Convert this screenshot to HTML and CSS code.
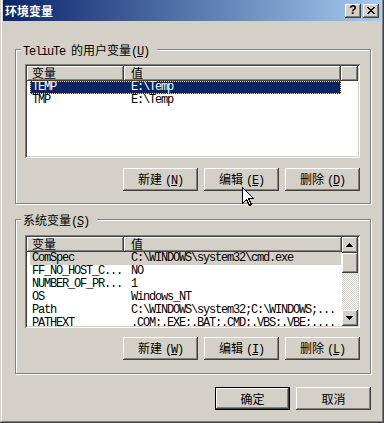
FILE: index.html
```html
<!DOCTYPE html>
<html lang="zh-CN">
<head>
    <meta charset="UTF-8"/>
    <title>环境变量</title>
    <link rel="stylesheet" href="styles.css">
</head>
<body>

<div class="window">
    <div class="titlebar">
        <span class="title">环境变量</span>
        <div class="caption-btns">
            <span class="cap-btn help">?</span>
            <span class="cap-btn">
                <svg width="8" height="7" viewBox="0 0 8 7" shape-rendering="crispEdges">
                    <path d="M0 0h2v1h1v1h2V1h1V0h2v1H7v1H6v1H5v1h1v1h1v1h1v1H6V6H5V5H3v1H2v1H0V6h1V5h1V4h1V3H2V2H1V1H0z" fill="#000"/>
                </svg>
            </span>
        </div>
    </div>

    <div class="content">
        <div class="group">
            <div class="legend"><span class="en">TeliuTe </span>的用户变量<span class="en">(<u>U</u>)</span></div>
            <div class="listview user-list">
                <div class="lv-header">
                    <div class="col col-name">变量</div>
                    <div class="col col-value">值</div>
                    <div class="col col-fill"></div>
                </div>
                <div class="row selected"><span class="cell cell-name en">TEMP</span><span class="cell en">E:\Temp</span></div>
                <div class="row"><span class="cell cell-name en">TMP</span><span class="cell en">E:\Temp</span></div>
            </div>
            <div class="btn-row">
                <button class="btn">新建<span class="en key">(<u>N</u>)</span></button>
                <button class="btn">编辑<span class="en key">(<u>E</u>)</span></button>
                <button class="btn">删除<span class="en key">(<u>D</u>)</span></button>
            </div>
        </div>

        <div class="group system">
            <div class="legend">系统变量<span class="en">(<u>S</u>)</span></div>
            <div class="listview sys-list">
                <div class="lv-main">
                    <div class="lv-header">
                        <div class="col col-name">变量</div>
                        <div class="col col-value">值</div>
                    </div>
                    <div class="lv-rows">
                        <div class="row inactive"><span class="cell cell-name en">ComSpec</span><span class="cell en">C:\WINDOWS\system32\cmd.exe</span></div>
                        <div class="row"><span class="cell cell-name en">FF_NO_HOST_C...</span><span class="cell en">NO</span></div>
                        <div class="row"><span class="cell cell-name en">NUMBER_OF_PR...</span><span class="cell en">1</span></div>
                        <div class="row"><span class="cell cell-name en">OS</span><span class="cell en">Windows_NT</span></div>
                        <div class="row"><span class="cell cell-name en">Path</span><span class="cell en">C:\WINDOWS\system32;C:\WINDOWS;...</span></div>
                        <div class="row"><span class="cell cell-name en">PATHEXT</span><span class="cell en">.COM;.EXE;.BAT;.CMD;.VBS;.VBE;....</span></div>
                    </div>
                </div>
                <div class="scrollbar">
                    <span class="sb-btn">
                        <svg width="16" height="16" viewBox="0 0 16 16" shape-rendering="crispEdges"><path d="M7 6h1v1h1v1h1v1h1v1H4V9h1V8h1V7h1z" fill="#000"/></svg>
                    </span>
                    <span class="sb-thumb"></span>
                    <span class="sb-track"></span>
                    <span class="sb-btn">
                        <svg width="16" height="16" viewBox="0 0 16 16" shape-rendering="crispEdges"><path d="M4 6h7v1h-1v1H9v1H8v1H7V9H6V8H5V7H4z" fill="#000"/></svg>
                    </span>
                </div>
            </div>
            <div class="btn-row">
                <button class="btn">新建<span class="en key">(<u>W</u>)</span></button>
                <button class="btn">编辑<span class="en key">(<u>I</u>)</span></button>
                <button class="btn">删除<span class="en key">(<u>L</u>)</span></button>
            </div>
        </div>

        <div class="footer">
            <button class="btn btn-default">确定</button>
            <button class="btn">取消</button>
        </div>
    </div>

    <!-- mouse pointer over the edit button -->
    <svg class="pointer" width="12" height="20" viewBox="0 0 12 20" shape-rendering="crispEdges">
        <path d="M0.5 0.5V16.5L4.5 12.5L7.5 18.5L9.5 17.5L6.5 11.5H11.5Z" fill="#fff" stroke="#000" stroke-width="1"/>
    </svg>
</div>

</body>
</html>
```

FILE: styles.css
```css
body {
  margin: 0;
  background: #d4d0c8;
  font-family: "Noto Sans CJK SC", sans-serif;
  font-size: 12px;
  line-height: 13px;
  color: #000;
}

.en {
  font-family: "Liberation Mono", "Noto Sans CJK SC", monospace;
  letter-spacing: -1.2px;
}

.window {
  position: relative;
  width: 384px;
  height: 423px;
  box-sizing: border-box;
  padding: 0 3px 3px;
  background: #d4d0c8;
  box-shadow: inset -1px -1px #404040, inset 1px 0 #d4d0c8,
              inset -2px -2px #808080, inset 2px 0 #fff;
}

.titlebar {
  height: 21px;
  display: flex;
  align-items: center;
  justify-content: space-between;
  background: linear-gradient(to right, #0a246a, #a6caf0);
}

.title {
  padding-left: 2px;
  color: #fff;
  font-weight: bold;
  font-size: 12px;
}

.caption-btns {
  display: flex;
  gap: 2px;
  margin-right: 2px;
}

.cap-btn {
  width: 16px;
  height: 14px;
  display: flex;
  align-items: center;
  justify-content: center;
  background: #d4d0c8;
  box-shadow: inset -1px -1px #404040, inset 1px 1px #fff,
              inset -2px -2px #808080;
}

.help {
  font-family: "Liberation Sans", sans-serif;
  font-weight: bold;
  font-size: 12px;
}

.content {
  padding: 28px 10px 0 12px;
}

.group {
  border: 1px solid #808080;
  box-shadow: inset 1px 1px #fff, 1px 1px #fff;
  padding: 0 10px 12px 9px;
}

.group.system {
  margin-top: 15px;
  padding-bottom: 13px;
}

.legend {
  width: fit-content;
  margin: -7px 0 0 -4px;
  padding: 0 8px 0 2px;
  background: #d4d0c8;
  height: 13px;
}

.listview {
  margin-top: 8px;
  height: 94px;
  box-sizing: border-box;
  padding: 2px;
  background: #fff;
  overflow: hidden;
  box-shadow: inset 1px 1px #808080, inset -1px -1px #fff,
              inset 2px 2px #404040, inset -2px -2px #d4d0c8;
}

.sys-list {
  margin-top: 9px;
  height: 93px;
  display: flex;
}

.lv-main {
  flex: 1;
  display: flex;
  flex-direction: column;
}

.lv-rows {
  flex: 1;
  overflow: hidden;
}

.lv-header {
  display: flex;
  height: 15px;
  flex: none;
}

.col {
  height: 15px;
  box-sizing: border-box;
  background: #d4d0c8;
  line-height: 14px;
  box-shadow: inset -1px -1px #404040, inset 1px 1px #fff,
              inset -2px -2px #808080;
}

.col-name {
  width: 97px;
  padding-left: 5px;
}

.col-value {
  width: 217px;
  padding-left: 7px;
}

.sys-list .col-value {
  flex: 1;
}

.col-fill {
  flex: 1;
}

.row {
  display: flex;
  height: 13px;
  line-height: 13px;
  width: 311px;
  margin-left: 3px;
  white-space: nowrap;
}

.cell-name {
  width: 101px;
  flex: none;
  padding-left: 2px;
  box-sizing: border-box;
}

.row.selected {
  background: #0a246a;
  color: #fff;
  outline: 1px dotted #f0d890;
  outline-offset: -1px;
}

.row.inactive {
  background: #d4d0c8;
}

.scrollbar {
  width: 16px;
  display: flex;
  flex-direction: column;
}

.sb-btn,
.sb-thumb {
  display: block;
  width: 16px;
  background: #d4d0c8;
  box-shadow: inset -1px -1px #404040, inset 1px 1px #fff,
              inset -2px -2px #808080, inset 2px 2px #d4d0c8;
}

.sb-btn {
  height: 16px;
}

.sb-btn svg {
  display: block;
}

.sb-thumb {
  height: 20px;
}

.sb-track {
  flex: 1;
  background: repeating-conic-gradient(#d4d0c8 0 25%, #fff 0 50%) 0 0 / 2px 2px;
}

.btn-row {
  display: flex;
  justify-content: flex-end;
  gap: 6px;
  margin-top: 10px;
}

.system .btn-row {
  margin-top: 9px;
}

.btn {
  width: 75px;
  height: 23px;
  padding: 0;
  border: none;
  background: #d4d0c8;
  font: inherit;
  color: #000;
  box-shadow: inset -1px -1px #404040, inset 1px 1px #fff,
              inset -2px -2px #808080, inset 2px 2px #d4d0c8;
}

.key {
  padding-left: 3px;
}

.btn-default {
  box-shadow: inset 0 0 0 1px #000, inset -2px -2px #404040,
              inset 2px 2px #fff, inset -3px -3px #808080;
}

.footer {
  display: flex;
  justify-content: flex-end;
  gap: 6px;
  margin-top: 13px;
}

.pointer {
  position: absolute;
  left: 242px;
  top: 187px;
}
```
